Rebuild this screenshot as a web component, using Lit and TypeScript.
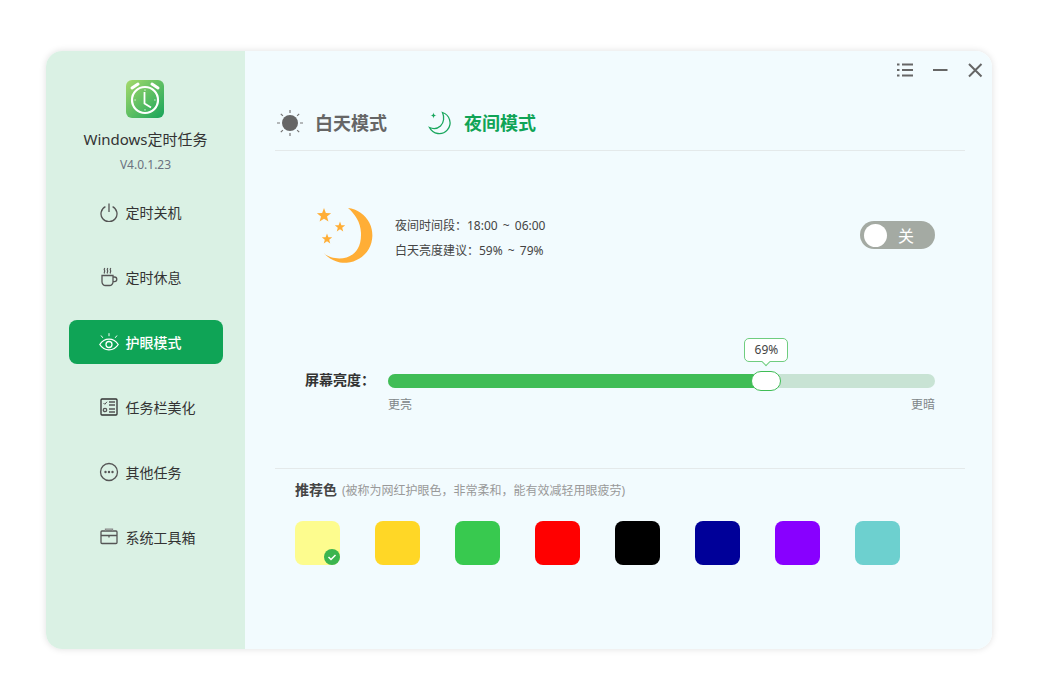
import { css, html, LitElement, svg } from 'lit';
import { customElement, state } from 'lit/decorators.js';

const star = (cx: number, cy: number, r: number) => {
  const pts: string[] = [];
  for (let i = 0; i < 10; i++) {
    const rad = i % 2 ? r * 0.42 : r;
    const a = -Math.PI / 2 + (i * Math.PI) / 5;
    pts.push(`${(cx + rad * Math.cos(a)).toFixed(2)},${(cy + rad * Math.sin(a)).toFixed(2)}`);
  }
  return pts.join(' ');
};

const navIcons = {
  power: svg`<path d="M6.400 4.600a8 8 0 1 0 7.200 0" /><path d="M10 1.500v8.500" />`,
  coffee: svg`<path d="M3 8.500h11v6.500a3.500 3.500 0 0 1-3.500 3.500h-4A3.500 3.500 0 0 1 3 15z" /><path d="M14 10h1.500a2.200 2.200 0 0 1 0 4.600H14" /><path d="M5.500 6.500c-1-1.300 1-2 0-3.200s.6-1.500 0-2.300M8.500 6.500c-1-1.300 1-2 0-3.200s.6-1.500 0-2.300M11.500 6.500c-1-1.300 1-2 0-3.200s.6-1.500 0-2.300" stroke-width="1.200" />`,
  eye: svg`<path d="M.8 12.500C3 9 6.300 7.200 10 7.200s7 1.800 9.200 5.300C17 16 13.700 17.800 10 17.800S3 16 .8 12.500z" /><circle cx="10" cy="12.500" r="3" /><path d="M10 1.200v3M2 3.500l1.800 2.300M18 3.500l-1.800 2.300" stroke-width="1" />`,
  list: svg`<rect x="2" y="2" width="16" height="16" rx="1" stroke="#333" /><path d="M4.500 6l1.300 1.300L8 4.800" stroke-width="1" /><circle cx="6" cy="13" r="1.700" /><path d="M10 5h6M10 8h6M10 12h6M10 15h6" />`,
  more: svg`<circle cx="10" cy="10" r="8.500" /><circle cx="6.500" cy="10" r="1.200" fill="#555" stroke="none" /><circle cx="10" cy="10" r="1.200" fill="#555" stroke="none" /><circle cx="13.500" cy="10" r="1.200" fill="#555" stroke="none" />`,
  box: svg`<rect x="2" y="4" width="16" height="12.500" rx="1" /><path d="M6.500 4V2.200h7V4" stroke="#888" /><path d="M2 8.500h16M10 8.500v2" />`,
};

const navItems: { icon: keyof typeof navIcons; label: string }[] = [
  { icon: 'power', label: '定时关机' },
  { icon: 'coffee', label: '定时休息' },
  { icon: 'eye', label: '护眼模式' },
  { icon: 'list', label: '任务栏美化' },
  { icon: 'more', label: '其他任务' },
  { icon: 'box', label: '系统工具箱' },
];

const swatches = ['#fdfc8e', '#ffd726', '#38c94f', '#ff0000', '#000000', '#000099', '#8800ff', '#6dd0cf'];

@customElement('app-root')
export class AppRoot extends LitElement {
  static styles = css`
    :host {
      display: block;
      padding: 51px 48px 51px 46px;
      background: #fff;
      color: #333;
      font-family: 'Noto Sans', 'Noto Sans CJK SC', sans-serif;
    }

    .window {
      display: flex;
      height: 598px;
      border-radius: 16px;
      overflow: hidden;
      box-shadow: 0 0 7px rgba(0, 0, 0, 0.13);
    }

    .side {
      display: flex;
      flex-direction: column;
      align-items: center;
      width: 199px;
      flex: none;
      padding-top: 29px;
      box-sizing: border-box;
      background: #daf1e4;
    }

    .logo {
      display: block;
      width: 38px;
      height: 38px;
      margin-right: 2px;
    }

    .name {
      margin-top: 10px;
      font-size: 15px;
      line-height: 22px;
      color: #333;
    }

    .version {
      margin-top: 6px;
      font-size: 12px;
      line-height: 18px;
      color: #6b7280;
    }

    nav {
      display: flex;
      flex-direction: column;
      gap: 21px;
      width: 154px;
      margin-top: 16px;
    }

    .item {
      display: flex;
      align-items: center;
      gap: 7px;
      height: 44px;
      padding-left: 30px;
      border-radius: 8px;
      font-size: 14px;
      color: #333;
    }

    .item.on {
      background: #0fa456;
      color: #fff;
      font-weight: 500;
    }

    .item svg {
      width: 20px;
      height: 20px;
      fill: none;
      stroke: #555;
      stroke-width: 1.300;
    }

    .item.on svg {
      stroke: #fff;
    }

    main {
      flex: 1;
      padding: 0 27px 0 30px;
      background: #f2fbfe;
    }

    .bar {
      display: flex;
      justify-content: flex-end;
      align-items: center;
      gap: 17px;
      height: 38px;
      margin-right: -19px;
      padding-bottom: 7px;
    }

    .bar svg {
      width: 18px;
      height: 18px;
      fill: none;
      stroke: #666;
      stroke-width: 2;
    }

    .tabs {
      display: flex;
      align-items: center;
      height: 54px;
      padding-left: 1px;
      border-bottom: 1px solid #e4e9ea;
    }

    .tab {
      display: flex;
      align-items: center;
      gap: 11px;
      font-size: 18px;
      font-weight: 700;
      color: #666;
    }

    .tab span {
      margin-bottom: 2px;
    }

    .tab.on {
      margin-left: 40px;
      color: #0fa456;
    }

    .tab svg {
      display: block;
    }

    .night {
      display: flex;
      align-items: center;
      height: 56px;
      margin-top: 56px;
      padding: 0 30px 0 41px;
    }

    .night svg {
      width: 57px;
      height: 56px;
      flex: none;
    }

    .hours {
      flex: 1;
      margin: 6px 0 0 22px;
      font-size: 12px;
      line-height: 25px;
      word-spacing: 2px;
      color: #444;
    }

    .toggle {
      display: flex;
      align-items: center;
      gap: 11px;
      width: 75px;
      height: 28px;
      padding-left: 4px;
      box-sizing: border-box;
      border-radius: 14px;
      background: #a4aaa3;
      color: #fff;
      font-size: 16px;
    }

    .knob {
      width: 23px;
      height: 23px;
      border-radius: 50%;
      background: #fff;
    }

    .brightness {
      display: flex;
      align-items: center;
      height: 14px;
      margin-top: 111px;
      padding: 0 30px;
    }

    .brightness label {
      width: 83px;
      flex: none;
      margin-bottom: 4px;
      font-size: 14px;
      font-weight: 700;
      color: #333;
    }

    .track {
      position: relative;
      flex: 1;
      height: 14px;
      border-radius: 7px;
      background: #c8e3d4;
    }

    .fill {
      height: 100%;
      border-radius: 7px;
      background: #40bd56;
    }

    .thumb {
      position: absolute;
      top: -3px;
      width: 30px;
      height: 20px;
      margin-left: -14px;
      box-sizing: border-box;
      border: 1px solid #40bd56;
      border-radius: 10px;
      background: #fff;
    }

    .tip {
      position: absolute;
      top: -36px;
      width: 44px;
      height: 24px;
      margin-left: -21px;
      box-sizing: border-box;
      border: 1px solid #6fcd7f;
      border-radius: 5px;
      background: #fff;
      font-size: 12px;
      line-height: 22px;
      text-align: center;
      color: #444;
    }

    .tip::after {
      content: '';
      position: absolute;
      left: 50%;
      bottom: -4px;
      width: 6px;
      height: 6px;
      margin-left: -3px;
      box-sizing: border-box;
      border-right: 1px solid #6fcd7f;
      border-bottom: 1px solid #6fcd7f;
      background: #fff;
      transform: rotate(45deg);
    }

    .ends {
      display: flex;
      justify-content: space-between;
      margin: 8px 30px 0 113px;
      font-size: 12px;
      line-height: 18px;
      color: #808688;
    }

    .recommend {
      margin-top: 54px;
      padding: 11px 0 0 20px;
      border-top: 1px solid #e4e9ea;
    }

    .head {
      font-size: 12px;
      line-height: 20px;
      color: #999;
    }

    .head b {
      margin-right: 5px;
      font-size: 14px;
      font-weight: 700;
      color: #444;
    }

    .colors {
      display: flex;
      gap: 35px;
      margin-top: 20px;
    }

    .swatch {
      position: relative;
      width: 45px;
      height: 44px;
      border-radius: 8px;
    }

    .check {
      position: absolute;
      right: 0;
      bottom: 0;
      width: 16px;
      height: 16px;
    }
  `;

  @state()
  brightness = 69;

  render() {
    return html`
      <div class="window">
        <aside class="side">
          <svg class="logo" viewBox="0 0 38 38">
            <defs>
              <linearGradient id="lg" x1="0" y1="0" x2="1" y2="1">
                <stop offset="0" stop-color="#a6da6c" />
                <stop offset="1" stop-color="#17a45a" />
              </linearGradient>
            </defs>
            <rect width="38" height="38" rx="6" fill="url(#lg)" />
            <circle cx="19" cy="20" r="13" fill="none" stroke="#fff" stroke-width="2.200" />
            <path d="M6 8l6-4M32 8l-6-4" stroke="#fff" stroke-width="3" stroke-linecap="round" />
            <path d="M18.500 12V23.500l6.500 4" fill="none" stroke="#fff" stroke-width="1.800" />
            <path d="M19 9.500v1.200M19 29.300v1.200M8.500 20h1.200M28.300 20h1.200" stroke="#fff" stroke-width="1" />
          </svg>
          <div class="name">Windows定时任务</div>
          <div class="version">V4.0.1.23</div>
          <nav>
            ${navItems.map(
              (n) => html`
                <div class="item ${n.icon === 'eye' ? 'on' : ''}">
                  <svg viewBox="0 0 20 20">${navIcons[n.icon]}</svg>
                  <span>${n.label}</span>
                </div>
              `,
            )}
          </nav>
        </aside>
        <main>
          <div class="bar">
            <svg viewBox="0 0 18 18">
              <path d="M1 3.500h2.500M6 3.500h11M1 9h2.500M6 9h11M1 14.500h2.500M6 14.500h11" />
            </svg>
            <svg viewBox="0 0 18 18"><path d="M2 9h14.500" /></svg>
            <svg viewBox="0 0 18 18"><path d="M3 3l12.500 12.500M15.500 3L3 15.500" /></svg>
          </div>
          <div class="tabs">
            <div class="tab">
              <svg width="28" height="28" viewBox="0 0 28 28" fill="none" stroke="#777" stroke-width="1.200">
                <circle cx="14" cy="14" r="8" fill="#666" stroke="none" />
                <path d="M14 1v3M14 24v3M1 14h3M24 14h3M4.800 4.800l2.100 2.100M21.100 21.100l2.100 2.100M4.800 23.200l2.100-2.100M21.100 6.900l2.100-2.100" />
              </svg>
              <span>白天模式</span>
            </div>
            <div class="tab on">
              <svg width="26" height="26" viewBox="0 0 26 26" fill="none" stroke="#1aa75e" stroke-width="1.300">
                <path d="M15.500 2.500a10.800 10.800 0 1 1-13 15c3.500 1.500 8 1.200 11-1.500 3.500-3.200 4-9 2-13.500z" />
                <path d="M6.500 2.500c.3 2 1 2.700 3 3-2 .3-2.700 1-3 3-.3-2-1-2.700-3-3 2-.3 2.700-1 3-3z" fill="#1aa75e" stroke="none" />
              </svg>
              <span>夜间模式</span>
            </div>
          </div>
          <div class="night">
            <svg viewBox="0 0 57 56">
              <path d="M32 1A27.500 27.500 0 1 1 7 45C13 54 46 58 45 26 44.500 15 39 7 32 1z" fill="#ffae36" />
              <polygon points="${star(8, 8.500, 7.500)}" fill="#ffae36" />
              <polygon points="${star(24, 20, 5.500)}" fill="#ffae36" />
              <polygon points="${star(11, 32, 5.500)}" fill="#ffae36" />
            </svg>
            <div class="hours">
              <div>夜间时间段：18:00 ~ 06:00</div>
              <div>白天亮度建议：59% ~ 79%</div>
            </div>
            <div class="toggle"><span class="knob"></span><span>关</span></div>
          </div>
          <div class="brightness">
            <label>屏幕亮度：</label>
            <div class="track">
              <div class="fill" style="width: ${this.brightness}%"></div>
              <div class="thumb" style="left: ${this.brightness}%"></div>
              <div class="tip" style="left: ${this.brightness}%">${this.brightness}%</div>
            </div>
          </div>
          <div class="ends"><span>更亮</span><span>更暗</span></div>
          <section class="recommend">
            <div class="head"><b>推荐色</b>(被称为网红护眼色，非常柔和，能有效减轻用眼疲劳)</div>
            <div class="colors">
              ${swatches.map(
                (c, i) => html`
                  <div class="swatch" style="background: ${c}">
                    ${i === 0
                      ? html`<svg class="check" viewBox="0 0 16 16">
                          <circle cx="8" cy="8" r="8" fill="#3bb54f" />
                          <path d="M4.500 8l2.500 2.500 4.500-4.500" fill="none" stroke="#fff" stroke-width="1.500" />
                        </svg>`
                      : ''}
                  </div>
                `,
              )}
            </div>
          </section>
        </main>
      </div>
    `;
  }
}

declare global {
  interface HTMLElementTagNameMap {
    'app-root': AppRoot;
  }
}
